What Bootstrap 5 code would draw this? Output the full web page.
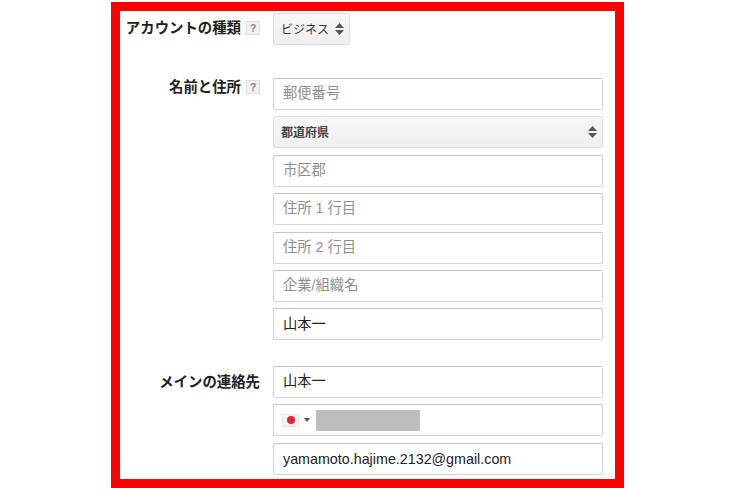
<!DOCTYPE html>
<html lang="ja">
<head>
<meta charset="utf-8">
<title>アカウント</title>
<link rel="stylesheet" href="https://cdn.jsdelivr.net/npm/bootstrap@5.3.0/dist/css/bootstrap.min.css">
<style>
html,body{height:495px;overflow:hidden;background:#fff}
body{font-family:"Liberation Sans","Noto Sans CJK JP",sans-serif;font-size:14px;color:#222}
.frame-box{width:513px;height:486px;margin:2px 0 0 111px;border:9.5px solid #fe0000;padding-top:2px;overflow:hidden}
.form-line{gap:13px}
.line-gap-a{margin-top:33px}
.line-gap-b{margin-top:25.5px}
.label-col{width:140px;flex:none;height:32px;font-weight:700;font-size:14.4px;color:#222}
.label-top{line-height:30px}
.label-upper{line-height:18px}
.label-mid{line-height:32px}
.help-mark{width:14px;height:14px;flex:none;background:#f1f1f1;border:1px solid #dcdcdc;color:#888;font-size:11px;font-weight:700;line-height:12px;text-align:center;margin-left:5px}
.help-first{margin-top:8px}
.help-second{margin-top:2px}
.fields-col{width:330px;flex:none;gap:6.4px}
.field-box{height:32px;border:1px solid #d4d4d4;border-top-color:#c6c6c6;border-radius:2px;background:#fff;padding:0 9px;font-size:14.3px;line-height:29px;color:#222}
.field-low{line-height:31px}
.hint{color:#8f8f8f}
.select-box{background:linear-gradient(#f7f7f7,#efefef);border-color:#dcdcdc;color:#444;font-size:12px;font-weight:700;padding:0 5px 0 7px}
.select-text{padding-top:3px}
.type-select{width:77px;font-weight:400;font-size:12px;color:#333}
.updown{width:9px;height:14px;flex:none}
.flag-box{width:17px;height:13px;background:#f4f4f4;border:1px solid #e8e8e8}
.flag-dot{width:8px;height:8px;background:#e8212b;border-radius:50%}
.caret-mark{width:0;height:0;border-left:3px solid transparent;border-right:3px solid transparent;border-top:4px solid #2a5db0;margin-left:5px}
.masked{width:104px;height:21px;background:#bdbdbd;margin-left:6px}
.phone-box{padding:0 0 0 8px}
</style>
</head>
<body>
<div class="frame-box">
  <div class="form-line d-flex">
    <div class="label-col label-top d-flex justify-content-end">
      <span>アカウントの種類</span><span class="help-mark help-first">?</span>
    </div>
    <div class="field-box select-box type-select d-flex align-items-center justify-content-between">
      <span class="select-text">ビジネス</span>
      <svg class="updown" viewBox="0 0 9 14"><path d="M4.500 1 9 6H0zM0 8h9l-4.500 5z" fill="#555"/></svg>
    </div>
  </div>

  <div class="form-line d-flex line-gap-a">
    <div class="label-col label-upper d-flex justify-content-end">
      <span>名前と住所</span><span class="help-mark help-second">?</span>
    </div>
    <div class="fields-col d-flex flex-column">
      <div class="field-box hint">郵便番号</div>
      <div class="field-box select-box d-flex align-items-center justify-content-between">
        <span class="select-text">都道府県</span>
        <svg class="updown" viewBox="0 0 9 14"><path d="M4.500 1 9 6H0zM0 8h9l-4.500 5z" fill="#555"/></svg>
      </div>
      <div class="field-box hint">市区郡</div>
      <div class="field-box hint">住所 1 行目</div>
      <div class="field-box hint">住所 2 行目</div>
      <div class="field-box hint">企業/組織名</div>
      <div class="field-box field-low">山本一</div>
    </div>
  </div>

  <div class="form-line d-flex line-gap-b">
    <div class="label-col label-mid d-flex justify-content-end">
      <span>メインの連絡先</span>
    </div>
    <div class="fields-col d-flex flex-column">
      <div class="field-box">山本一</div>
      <div class="field-box phone-box d-flex align-items-center">
        <span class="flag-box d-flex align-items-center justify-content-center"><span class="flag-dot"></span></span>
        <span class="caret-mark"></span>
        <span class="masked"></span>
      </div>
      <div class="field-box field-low">yamamoto.hajime.2132@gmail.com</div>
    </div>
  </div>
</div>
<script src="https://cdn.jsdelivr.net/npm/bootstrap@5.3.0/dist/js/bootstrap.bundle.min.js"></script>
</body>
</html>
